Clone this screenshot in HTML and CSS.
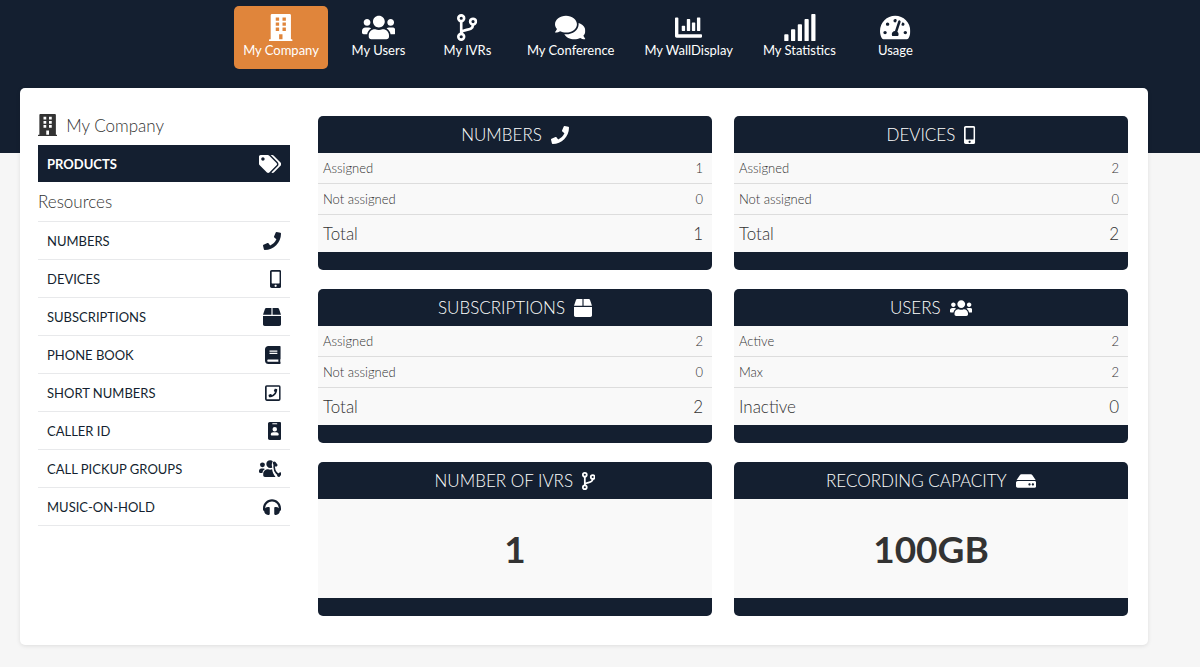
FILE: index.html
```html
<!DOCTYPE html>
<html lang="en">
<head>
    <meta charset="UTF-8">
    <meta name="viewport" content="width=device-width, initial-scale=1.0">
    <title>My Company</title>
    <link rel="stylesheet" href="styles.css">
</head>
<body>
    <!-- Icon set -->
    <svg class="icon-set" aria-hidden="true">
        <symbol id="building" viewBox="0 0 448 512"><path fill-rule="evenodd" d="M436 480h-20V24c0-13-11-24-24-24H56C43 0 32 11 32 24v456H12c-7 0-12 5-12 12v20h448v-20c0-7-5-12-12-12zM128 64h64v64h-64zM256 64h64v64h-64zM128 160h64v64h-64zM256 160h64v64h-64zM128 256h64v64h-64zM256 256h64v64h-64zM192 384h64v96h-64z"/></symbol>
        <symbol id="users" viewBox="0 0 640 512"><path d="M96 224c35.3 0 64-28.7 64-64s-28.7-64-64-64-64 28.7-64 64 28.7 64 64 64zm448 0c35.3 0 64-28.7 64-64s-28.7-64-64-64-64 28.7-64 64 28.7 64 64 64zm32 32h-64c-17.6 0-33.5 7.1-45.1 18.6 40.3 22.1 68.9 62 75.1 109.4h66c17.7 0 32-14.3 32-32v-32c0-35.3-28.7-64-64-64zm-256 0c61.9 0 112-50.1 112-112S381.9 32 320 32 208 82.1 208 144s50.1 112 112 112zm76.8 32h-8.3c-20.8 10-43.9 16-68.5 16s-47.6-6-68.5-16h-8.3C179.6 288 128 339.6 128 403.2V432c0 26.5 21.5 48 48 48h288c26.5 0 48-21.5 48-48v-28.8c0-63.6-51.6-115.2-115.2-115.2zm-223.7-13.4C161.5 263.1 145.6 256 128 256H64c-35.3 0-64 28.7-64 64v32c0 17.7 14.3 32 32 32h65.9c6.3-47.4 34.9-87.3 75.2-109.4z"/></symbol>
        <symbol id="branch" viewBox="0 0 384 512"><g fill="none" stroke="currentColor" stroke-width="50"><circle cx="80" cy="80" r="55"/><circle cx="304" cy="144" r="55"/><circle cx="80" cy="432" r="55"/><path d="M80 135v242M304 199c0 140-200 70-222 158"/></g></symbol>
        <symbol id="comments" viewBox="0 0 576 512"><path d="M416 192c0-88.4-93.1-160-208-160S0 103.6 0 192c0 34.3 14.1 65.9 38 92-13.4 30.2-35.5 54.2-35.8 54.5-2.2 2.3-2.8 5.7-1.5 8.7S4.8 352 8 352c36.6 0 66.9-12.3 88.7-25 32.2 15.7 70.3 25 111.3 25 114.9 0 208-71.6 208-160zm122 220c23.9-26 38-57.7 38-92 0-66.9-53.5-124.2-129.3-148.1.9 6.6 1.3 13.3 1.3 20.1 0 105.9-107.7 192-240 192-10.8 0-21.3-.8-31.7-1.9C207.8 439.6 281.8 480 368 480c41 0 79.1-9.2 111.3-25 21.8 12.7 52.1 25 88.7 25 3.2 0 6.1-1.9 7.3-4.8 1.3-2.9.7-6.3-1.5-8.7-.3-.3-22.4-24.2-35.8-54.5z"/></symbol>
        <symbol id="chart" viewBox="0 0 512 512"><path d="M16 64h32c9 0 16 7 16 16v304h432c9 0 16 7 16 16v32c0 9-7 16-16 16H32c-18 0-32-14-32-32V80c0-9 7-16 16-16z"/><rect x="128" y="224" width="64" height="96" rx="12"/><rect x="224" y="96" width="64" height="224" rx="12"/><rect x="320" y="160" width="64" height="160" rx="12"/><rect x="416" y="64" width="64" height="256" rx="12"/></symbol>
        <symbol id="signal" viewBox="0 0 640 512"><rect x="24" y="384" width="80" height="128" rx="16"/><rect x="152" y="288" width="80" height="224" rx="16"/><rect x="280" y="192" width="80" height="320" rx="16"/><rect x="408" y="96" width="80" height="416" rx="16"/><rect x="536" y="0" width="80" height="512" rx="16"/></symbol>
        <symbol id="gauge" viewBox="0 0 576 512"><path d="M288 32C128.94 32 0 160.94 0 320c0 52.8 14.25 102.26 39.06 144.8 5.61 9.62 16.3 15.2 27.44 15.2h443c11.14 0 21.83-5.58 27.44-15.2C561.75 422.26 576 372.8 576 320c0-159.06-128.94-288-288-288zm0 64c14.71 0 26.58 10.13 30.32 23.65-1.11 2.26-2.64 4.23-3.45 6.67l-9.22 27.67c-5.13 3.49-10.97 6.01-17.64 6.01-17.67 0-32-14.33-32-32S270.33 96 288 96zM96 384c-17.67 0-32-14.33-32-32s14.33-32 32-32 32 14.33 32 32-14.33 32-32 32zm48-160c-17.67 0-32-14.33-32-32s14.33-32 32-32 32 14.33 32 32-14.33 32-32 32zm246.77-72.41l-61.33 184C343.13 347.33 352 364.54 352 384c0 11.72-3.38 22.55-8.88 32H232.88c-5.5-9.45-8.88-20.28-8.88-32 0-33.94 26.5-61.43 59.9-63.59l61.34-184.01c4.17-12.56 17.73-19.45 30.36-15.17 12.57 4.19 19.35 17.79 15.17 30.36zm14.66 57.2l15.52-46.55c3.47-1.29 7.13-2.23 11.05-2.23 17.67 0 32 14.33 32 32s-14.33 32-32 32c-11.38-.01-20.89-6.28-26.57-15.22zM480 384c-17.67 0-32-14.33-32-32s14.33-32 32-32 32 14.33 32 32-14.33 32-32 32z"/></symbol>
        <symbol id="tags" viewBox="0 0 640 512"><path d="M497.941 225.941L286.059 14.059A48 48 0 0 0 252.118 0H48C21.49 0 0 21.49 0 48v204.118a48 48 0 0 0 14.059 33.941l211.882 211.882c18.744 18.745 49.136 18.746 67.882 0l204.118-204.118c18.745-18.745 18.745-49.137 0-67.882zM112 160c-26.51 0-48-21.49-48-48s21.49-48 48-48 48 21.49 48 48-21.49 48-48 48zm513.941 133.823L421.823 497.941c-18.745 18.745-49.137 18.745-67.882 0l-.36-.36L527.64 323.522c16.999-16.999 26.36-39.6 26.36-63.64s-9.362-46.641-26.36-63.64L331.397 0h48.721a48 48 0 0 1 33.941 14.059l211.882 211.882c18.745 18.745 18.745 49.137 0 67.882z"/></symbol>
        <symbol id="phone" viewBox="0 0 512 512"><path d="M493.4 24.6l-104-24c-11.3-2.6-22.9 3.3-27.5 13.9l-48 112c-4.2 9.8-1.4 21.3 6.9 28l60.6 49.6c-36 76.7-98.9 140.5-177.2 177.2l-49.6-60.6c-6.8-8.3-18.2-11.1-28-6.9l-112 48C3.9 366.5-2 378.1.6 389.4l24 104C27.1 504.2 36.7 512 48 512c256.1 0 464-207.5 464-464 0-11.2-7.7-20.9-18.6-23.4z"/></symbol>
        <symbol id="mobile" viewBox="0 0 320 512"><path d="M272 0H48C21.5 0 0 21.5 0 48v416c0 26.5 21.5 48 48 48h224c26.5 0 48-21.5 48-48V48c0-26.5-21.5-48-48-48zM160 480c-17.7 0-32-14.3-32-32s14.3-32 32-32 32 14.3 32 32-14.3 32-32 32zm112-108c0 6.6-5.4 12-12 12H60c-6.6 0-12-5.4-12-12V60c0-6.6 5.4-12 12-12h200c6.6 0 12 5.4 12 12v312z"/></symbol>
        <symbol id="box" viewBox="0 0 512 512"><path d="M509.5 184.6L458.9 32.8C452.4 13.2 434.1 0 413.4 0H272v192h238.7c-.4-2.5-.4-5-1.2-7.4zM240 0H98.6c-20.7 0-39 13.2-45.5 32.8L2.5 184.6c-.8 2.4-.8 4.9-1.2 7.4H240V0zM0 224v240c0 26.5 21.5 48 48 48h416c26.5 0 48-21.5 48-48V224H0z"/></symbol>
        <symbol id="book" viewBox="0 0 448 512"><path d="M448 360V24c0-13.3-10.7-24-24-24H96C43 0 0 43 0 96v320c0 53 43 96 96 96h328c13.3 0 24-10.7 24-24v-16c0-7.5-3.5-14.3-8.9-18.7-4.2-15.4-4.2-59.3 0-74.7 5.4-4.3 8.9-11.1 8.9-18.6zM128 134c0-3.3 2.7-6 6-6h212c3.3 0 6 2.7 6 6v20c0 3.3-2.7 6-6 6H134c-3.3 0-6-2.7-6-6v-20zm0 64c0-3.3 2.7-6 6-6h212c3.3 0 6 2.7 6 6v20c0 3.3-2.7 6-6 6H134c-3.3 0-6-2.7-6-6v-20zm253.4 250H96c-17.7 0-32-14.3-32-32 0-17.6 14.4-32 32-32h285.4c-1.9 17.1-1.9 46.9 0 64z"/></symbol>
        <symbol id="phone-square" viewBox="0 0 448 512"><rect x="24" y="56" width="400" height="400" rx="26" fill="none" stroke="currentColor" stroke-width="48"/><path transform="translate(100 132) scale(.484)" d="M493.4 24.6l-104-24c-11.3-2.6-22.9 3.3-27.5 13.9l-48 112c-4.2 9.8-1.4 21.3 6.9 28l60.6 49.6c-36 76.7-98.9 140.5-177.2 177.2l-49.6-60.6c-6.8-8.3-18.2-11.1-28-6.9l-112 48C3.9 366.5-2 378.1.6 389.4l24 104C27.1 504.2 36.7 512 48 512c256.1 0 464-207.5 464-464 0-11.2-7.7-20.9-18.6-23.4z"/></symbol>
        <symbol id="badge" viewBox="0 0 384 512"><path fill-rule="evenodd" d="M48 0h288c26 0 48 22 48 48v416c0 26-22 48-48 48H48c-26 0-48-22-48-48V48C0 22 22 0 48 0zM136 32h112a16 16 0 0 1 0 32H136a16 16 0 0 1 0-32zM192 144a64 64 0 1 0 0 128a64 64 0 1 0 0-128zM147 288h90c37 0 67 26 67 58v19c0 11-10 19-22 19H102c-12 0-22-8-22-19v-19c0-32 30-58 67-58z"/></symbol>
        <symbol id="pickup" viewBox="0 0 640 512"><circle cx="98" cy="138" r="70"/><path d="M64 244h64c16 0 30 5 41 15-38 24-66 62-72 109H32c-18 0-32-14-32-32v-28c0-35 29-64 64-64z"/><path d="M392 36c-20-20-44-30-74-30-62 0-110 48-110 110s48 114 110 114c22 0 42-6 60-16-20-58-20-124 14-178z"/><path d="M372 262c-36 16-76 16-112 0C188 262 120 316 120 392v40c0 26 22 48 48 48h302c-50-58-84-132-98-218z"/><g fill="none" stroke="currentColor"><path d="M436 100c-22 128 26 262 132 328" stroke-width="46"/><path d="M436 84l48 60M560 440l44-50" stroke-width="84" stroke-linecap="round"/></g></symbol>
        <symbol id="headphones" viewBox="0 0 512 512"><path d="M256 32C114.52 32 0 146.497 0 288v48a32 32 0 0 0 17.689 28.622l14.383 7.191C34.083 431.903 83.421 480 144 480h24c13.255 0 24-10.745 24-24V280c0-13.255-10.745-24-24-24h-24c-31.342 0-59.671 12.879-80 33.627V288c0-105.869 86.131-192 192-192s192 86.131 192 192v1.627C427.671 268.879 399.342 256 368 256h-24c-13.255 0-24 10.745-24 24v176c0 13.255 10.745 24 24 24h24c60.579 0 109.917-48.098 111.928-108.187l14.382-7.191A32 32 0 0 0 512 336v-48c0-141.479-114.496-256-256-256z"/></symbol>
        <symbol id="hdd" viewBox="0 0 576 512"><path d="M576 304v96c0 26.51-21.49 48-48 48H48c-26.51 0-48-21.49-48-48v-96c0-26.51 21.49-48 48-48h480c26.51 0 48 21.49 48 48zm-48-80a79.557 79.557 0 0 1 30.777 6.165L462.25 85.374A48.003 48.003 0 0 0 422.311 64H153.689a48 48 0 0 0-39.938 21.374L17.223 230.165A79.557 79.557 0 0 1 48 224h480zm-48 96c-17.673 0-32 14.327-32 32s14.327 32 32 32 32-14.327 32-32-14.327-32-32-32zm-96 0c-17.673 0-32 14.327-32 32s14.327 32 32 32 32-14.327 32-32-14.327-32-32-32z"/></symbol>
    </svg>

    <header class="header">
        <nav class="main-nav">
            <a href="#" class="active"><svg class="icon" viewBox="0 0 448 512"><use href="#building"/></svg>My Company</a>
            <a href="#"><svg class="icon" viewBox="0 0 640 512"><use href="#users"/></svg>My Users</a>
            <a href="#"><svg class="icon" viewBox="0 0 384 512"><use href="#branch"/></svg>My IVRs</a>
            <a href="#"><svg class="icon" viewBox="0 0 576 512"><use href="#comments"/></svg>My Conference</a>
            <a href="#"><svg class="icon" viewBox="0 0 512 512"><use href="#chart"/></svg>My WallDisplay</a>
            <a href="#"><svg class="icon" viewBox="0 0 640 512"><use href="#signal"/></svg>My Statistics</a>
            <a href="#"><svg class="icon" viewBox="0 0 576 512"><use href="#gauge"/></svg>Usage</a>
        </nav>
    </header>

    <main class="panel">
        <aside class="sidebar">
            <h1><svg class="icon" viewBox="0 0 448 512"><use href="#building"/></svg>My Company</h1>
            <a href="#" class="products">PRODUCTS<svg class="icon" viewBox="0 0 640 512"><use href="#tags"/></svg></a>
            <h2>Resources</h2>
            <ul class="resources">
                <li><a href="#">NUMBERS<svg class="icon" viewBox="0 0 512 512"><use href="#phone"/></svg></a></li>
                <li><a href="#">DEVICES<svg class="icon" viewBox="0 0 320 512"><use href="#mobile"/></svg></a></li>
                <li><a href="#">SUBSCRIPTIONS<svg class="icon" viewBox="0 0 512 512"><use href="#box"/></svg></a></li>
                <li><a href="#">PHONE BOOK<svg class="icon" viewBox="0 0 448 512"><use href="#book"/></svg></a></li>
                <li><a href="#">SHORT NUMBERS<svg class="icon" viewBox="0 0 448 512"><use href="#phone-square"/></svg></a></li>
                <li><a href="#">CALLER ID<svg class="icon" viewBox="0 0 384 512"><use href="#badge"/></svg></a></li>
                <li><a href="#">CALL PICKUP GROUPS<svg class="icon" viewBox="0 0 640 512"><use href="#pickup"/></svg></a></li>
                <li><a href="#">MUSIC-ON-HOLD<svg class="icon" viewBox="0 0 512 512"><use href="#headphones"/></svg></a></li>
            </ul>
        </aside>

        <div class="cards">
            <section class="card">
                <h3>NUMBERS<svg class="icon" viewBox="0 0 512 512"><use href="#phone"/></svg></h3>
                <table>
                    <tr><th>Assigned</th><td>1</td></tr>
                    <tr><th>Not assigned</th><td>0</td></tr>
                    <tr class="total"><th>Total</th><td>1</td></tr>
                </table>
            </section>
            <section class="card">
                <h3>DEVICES<svg class="icon" viewBox="0 0 320 512"><use href="#mobile"/></svg></h3>
                <table>
                    <tr><th>Assigned</th><td>2</td></tr>
                    <tr><th>Not assigned</th><td>0</td></tr>
                    <tr class="total"><th>Total</th><td>2</td></tr>
                </table>
            </section>
            <section class="card">
                <h3>SUBSCRIPTIONS<svg class="icon" viewBox="0 0 512 512"><use href="#box"/></svg></h3>
                <table>
                    <tr><th>Assigned</th><td>2</td></tr>
                    <tr><th>Not assigned</th><td>0</td></tr>
                    <tr class="total"><th>Total</th><td>2</td></tr>
                </table>
            </section>
            <section class="card">
                <h3>USERS<svg class="icon" viewBox="0 0 640 512"><use href="#users"/></svg></h3>
                <table>
                    <tr><th>Active</th><td>2</td></tr>
                    <tr><th>Max</th><td>2</td></tr>
                    <tr class="total"><th>Inactive</th><td>0</td></tr>
                </table>
            </section>
            <section class="card">
                <h3>NUMBER OF IVRS<svg class="icon" viewBox="0 0 384 512"><use href="#branch"/></svg></h3>
                <p class="big">1</p>
            </section>
            <section class="card">
                <h3>RECORDING CAPACITY<svg class="icon" viewBox="0 0 576 512"><use href="#hdd"/></svg></h3>
                <p class="big">100GB</p>
            </section>
        </div>
    </main>
</body>
</html>
```
FILE: styles.css
```css
* {
    box-sizing: border-box;
}
body {
    margin: 0;
    background-color: #f6f6f6;
    font-family: Lato, sans-serif;
    font-size: 13px;
    color: #333;
}
h1, h2, h3, p, ul {
    margin: 0;
    padding: 0;
}
a {
    text-decoration: none;
}
.icon-set {
    display: none;
}
.icon {
    display: block;
    height: 18px;
    fill: currentColor;
}

/* Header */
.header {
    background-color: #141f30;
    padding: 6px 52px 84px 20px;
}
.main-nav {
    display: flex;
    justify-content: center;
    gap: 12px;
}
.main-nav a {
    display: flex;
    flex-direction: column;
    align-items: center;
    min-width: 77px;
    padding: 8px 9px 10px;
    border-radius: 5px;
    color: #fff;
    line-height: 18px;
}
.main-nav a.active {
    background-color: #e0853b;
}
.main-nav .icon {
    height: 27px;
}

/* Content panel */
.panel {
    display: flex;
    gap: 28px;
    margin: -65px 52px 22px 20px;
    padding: 28px 20px 29px 18px;
    background-color: #fff;
    border-radius: 5px;
    box-shadow: 0 1px 4px rgba(0, 0, 0, 0.1);
}
.sidebar {
    flex: 0 0 252px;
}
.sidebar h1,
.sidebar h2 {
    display: flex;
    align-items: center;
    font-size: 17px;
    font-weight: 300;
}
.sidebar h1 {
    gap: 9px;
    height: 18px;
    margin-bottom: 11px;
}
.sidebar h1 .icon {
    height: 22px;
}
.sidebar h2 {
    height: 39px;
}
.sidebar a {
    display: flex;
    align-items: center;
    justify-content: space-between;
    height: 37px;
    padding: 0 9px;
    color: #141f30;
}
.sidebar .products {
    background-color: #141f30;
    color: #fff;
    font-weight: bold;
}
.resources {
    list-style: none;
    border-top: 1px solid #e8e9eb;
}
.resources li {
    border-bottom: 1px solid #e8e9eb;
}

/* Cards */
.cards {
    flex: 1;
    display: grid;
    grid-template-columns: 1fr 1fr;
    grid-auto-rows: 1fr;
    gap: 19px 22px;
}
.card {
    display: flex;
    flex-direction: column;
    background-color: #f9f9f9;
    border-bottom: 18px solid #141f30;
    border-radius: 5px;
    overflow: hidden;
}
.card h3 {
    display: flex;
    align-items: center;
    justify-content: center;
    gap: 9px;
    height: 37px;
    background-color: #141f30;
    color: #fff;
    font-size: 17px;
    font-weight: 300;
}
.card table {
    width: 100%;
    border-spacing: 0;
}
.card th,
.card td {
    height: 31px;
    padding: 0 9px 0 5px;
    border-bottom: 1px solid #ddd;
    font-weight: 300;
    text-align: left;
}
.card td {
    text-align: right;
}
.card .total th,
.card .total td {
    height: 37px;
    border-bottom: none;
    font-size: 17px;
}
.big {
    display: flex;
    align-items: center;
    justify-content: center;
    flex: 1;
    font-size: 37px;
    font-weight: bold;
}
```
